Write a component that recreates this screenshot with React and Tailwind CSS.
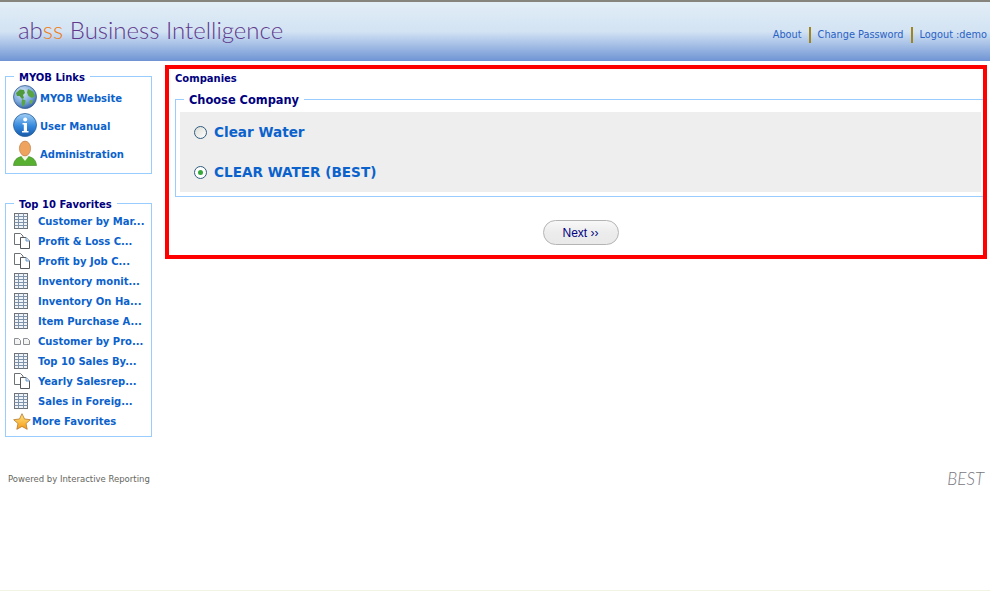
import React from "react";

const uiFont = "font-['DejaVu_Sans','Liberation_Sans',sans-serif]";

const GlobeIcon = () => (
  <svg width="24" height="24" viewBox="0 0 24 24" className="shrink-0">
    <defs>
      <radialGradient id="globeSea" cx="40%" cy="30%" r="75%">
        <stop offset="0%" stopColor="#dbe9f8" />
        <stop offset="60%" stopColor="#7aa8dc" />
        <stop offset="100%" stopColor="#2f5c9c" />
      </radialGradient>
    </defs>
    <circle cx="12" cy="12" r="11.5" fill="url(#globeSea)" stroke="#3a5f92" strokeWidth="0.8" />
    <path d="M3 8 L7 4.5 L11 5 L12 8 L10 10 L11 13 L9 14 L6.5 11 L4 11 Z" fill="#4f9a3c" />
    <path d="M9 14 L12.5 15.5 L12 19 L10 22 L8.5 18 Z" fill="#5aa443" />
    <path d="M15 4 L20 6.5 L22 11 L19 13 L15.5 11 L14 7.5 Z" fill="#5aa443" />
    <path d="M17 15 L20 15.5 L18.5 19 L16.5 18 Z" fill="#6aae4c" />
  </svg>
);

const InfoIcon = () => (
  <svg width="24" height="24" viewBox="0 0 24 24" className="shrink-0">
    <defs>
      <linearGradient id="infoBlue" x1="0" y1="0" x2="0" y2="1">
        <stop offset="0%" stopColor="#a2d0f5" />
        <stop offset="55%" stopColor="#3388dd" />
        <stop offset="100%" stopColor="#1a5aa8" />
      </linearGradient>
    </defs>
    <circle cx="12" cy="12" r="11.5" fill="url(#infoBlue)" stroke="#2a5f9c" strokeWidth="0.8" />
    <circle cx="12.2" cy="6.6" r="2" fill="#fff" />
    <path d="M9.5 10 H14 V18 H15.5 V19.5 H9 V18 H10.8 V11.5 H9.5 Z" fill="#fff" />
  </svg>
);

const UserIcon = () => (
  <svg width="24" height="26" viewBox="0 0 24 26" className="shrink-0">
    <path d="M0.5 25.5 C1 20 4 17.5 8.5 16.5 L12 19 L15.5 16.5 C20 17.5 23 20 23.5 25.5 Z" fill="#58b030" stroke="#3d7d20" strokeWidth="0.6" />
    <path d="M8.5 16.5 L12 21 L15.5 16.5 L14 15 H10 Z" fill="#f3f7e8" />
    <ellipse cx="12" cy="8.5" rx="5.6" ry="7.4" fill="#eea35f" stroke="#b8733a" strokeWidth="0.6" />
  </svg>
);

const TableIcon = () => (
  <svg width="14" height="16" viewBox="0 0 14 16">
    <rect x="0.5" y="0.5" width="13" height="15" fill="#f1f4f7" stroke="#6c7178" />
    <path d="M0.5 3.5 H13.5 M0.5 6.5 H13.5 M0.5 9.5 H13.5 M0.5 12.5 H13.5 M4.5 0.5 V15.5 M9.5 0.5 V15.5" stroke="#7f93ab" />
  </svg>
);

const CopiesIcon = () => (
  <svg width="16" height="16" viewBox="0 0 16 16">
    <path d="M0.5 0.5 H6.5 L9 3 V11.5 H0.5 Z" fill="#fff" stroke="#6c7178" />
    <path d="M6.5 4.5 H12 L15.5 8 V15.5 H6.5 Z" fill="#fff" stroke="#55595e" />
    <path d="M12 4.5 V8 H15.5" fill="#cfe2f5" stroke="#6f9ccc" />
  </svg>
);

const SmallDocsIcon = () => (
  <svg width="16" height="7" viewBox="0 0 16 7">
    <path d="M0.5 0.5 H4.5 L6.5 2.5 V6.5 H0.5 Z" fill="#f4f4f4" stroke="#8b8f94" />
    <path d="M9.5 0.5 H13.5 L15.5 2.5 V6.5 H9.5 Z" fill="#f4f4f4" stroke="#8b8f94" />
  </svg>
);

const StarIcon = () => (
  <svg width="18" height="17" viewBox="0 0 18 17" className="shrink-0">
    <defs>
      <linearGradient id="starFill" x1="0" y1="0" x2="0" y2="1">
        <stop offset="0%" stopColor="#ffe680" />
        <stop offset="100%" stopColor="#f59a16" />
      </linearGradient>
    </defs>
    <path d="M9 0.7 L11.5 6 L17.3 6.7 L13 10.6 L14.2 16.3 L9 13.4 L3.8 16.3 L5 10.6 L0.7 6.7 L6.5 6 Z" fill="url(#starFill)" stroke="#b9772a" strokeWidth="0.8" strokeLinejoin="round" />
  </svg>
);

const links = [
  { label: "MYOB Website", icon: <GlobeIcon /> },
  { label: "User Manual", icon: <InfoIcon /> },
  { label: "Administration", icon: <UserIcon /> },
];

const favorites = [
  { label: "Customer by Mar...", icon: <TableIcon /> },
  { label: "Profit & Loss C...", icon: <CopiesIcon /> },
  { label: "Profit by Job C...", icon: <CopiesIcon /> },
  { label: "Inventory monit...", icon: <TableIcon /> },
  { label: "Inventory On Ha...", icon: <TableIcon /> },
  { label: "Item Purchase A...", icon: <TableIcon /> },
  { label: "Customer by Pro...", icon: <SmallDocsIcon /> },
  { label: "Top 10 Sales By...", icon: <TableIcon /> },
  { label: "Yearly Salesrep...", icon: <CopiesIcon /> },
  { label: "Sales in Foreig...", icon: <TableIcon /> },
];

const App = () => {
  return (
    <div className={`h-[591px] w-[990px] overflow-hidden bg-white border-b border-[#f3f3e3] ${uiFont}`}>
      {/* HEADER */}
      <header className="h-[61px] border-t-2 border-[#85857d] bg-gradient-to-b from-[#e2eef7] via-[#d3e3f3] to-[#7094d4] flex justify-between pl-[18px] pr-[3px]">
        <div className="pt-[13px] text-[24px] leading-[30px] font-light text-[#5f3a8c] font-['Lato',sans-serif]">
          ab<span className="text-[#f07a10]">ss</span> Business Intelligence
        </div>
        <nav className="pt-[25px] flex items-start text-[9.75px] leading-[16px] text-[#2a62c4]">
          <a>About</a>
          <span className="mx-[7px] h-[16px] w-[2px] bg-[#a08420]" />
          <a>Change Password</a>
          <span className="mx-[7px] h-[16px] w-[2px] bg-[#a08420]" />
          <a>Logout :demo</a>
        </nav>
      </header>

      <div className="flex">
        {/* SIDEBAR */}
        <aside className="w-[165px] shrink-0 pl-[5px] pt-[8px]">
          <fieldset className="w-[147px] h-[105px] border border-[#99ccff] pl-[7px]">
            <legend className="ml-[1px] px-[5px] pt-[2px] text-[10px] leading-[13px] font-bold text-[#000080]">MYOB Links</legend>
            <ul className="flex flex-col gap-[3px]">
              {links.map((item) => (
                <li key={item.label} className="h-[25px] flex items-center gap-[3px]">
                  {item.icon}
                  <span className="text-[10px] font-bold text-[#0b62cc] mt-[3px]">{item.label}</span>
                </li>
              ))}
            </ul>
          </fieldset>

          <fieldset className="mt-[22px] w-[147px] h-[241px] border border-[#99ccff] pl-[8px]">
            <legend className="px-[5px] pt-[2px] text-[10px] leading-[13px] font-bold text-[#000080]">Top 10 Favorites</legend>
            <ul>
              {favorites.map((item) => (
                <li key={item.label} className="h-[20px] flex items-center">
                  <span className="w-[24px] shrink-0 flex items-center">{item.icon}</span>
                  <span className="text-[10px] font-bold text-[#0b62cc] whitespace-nowrap">{item.label}</span>
                </li>
              ))}
              <li className="h-[20px] flex items-center gap-[1px] -ml-[1px]">
                <StarIcon />
                <span className="text-[10px] font-bold text-[#0b62cc]">More Favorites</span>
              </li>
            </ul>
          </fieldset>

          <div className="mt-[36px] ml-[3px] text-[8.5px] leading-[12px] text-[#66665e] whitespace-nowrap">Powered by Interactive Reporting</div>
        </aside>

        {/* MAIN */}
        <main className="flex-1 min-w-0 pt-[4px] pr-[3px]">
          <div className="h-[194px] border-[4px] border-[#ff0000] overflow-hidden pl-[6px] pt-[3px]">
            <h2 className="text-[10px] leading-[14px] font-bold text-[#000080]">Companies</h2>
            <fieldset className="mt-[5px] -mr-[4px] h-[106px] border border-[#99ccff] pl-[4px] pr-[5px]">
              <legend className="ml-[4px] px-[5px] pt-[2px] text-[11.4px] leading-[15px] font-bold text-[#000080]">Choose Company</legend>
              <div className="bg-[#eeeeee] h-[80px] mt-[4px] pl-[14px] flex flex-col">
                <label className="h-[40px] flex items-center gap-[7px]">
                  <span className="w-[13px] h-[13px] rounded-full border border-[#2f5c80] bg-gradient-to-br from-[#dcdcd6] to-white" />
                  <span className="text-[13.6px] font-bold text-[#0b62cc]">Clear Water</span>
                </label>
                <label className="h-[40px] flex items-center gap-[7px]">
                  <span className="w-[13px] h-[13px] rounded-full border border-[#2f5c80] bg-white flex items-center justify-center">
                    <span className="w-[5px] h-[5px] rounded-full bg-[#35a83a]" />
                  </span>
                  <span className="text-[13.6px] font-bold text-[#0b62cc]">CLEAR WATER (BEST)</span>
                </label>
              </div>
            </fieldset>
            <div className="mt-[23px] pl-[3px] flex justify-center">
              <button className="w-[76px] h-[25px] rounded-full border border-[#b4b4b4] bg-gradient-to-b from-[#f8f8f8] via-[#ececec] to-[#e9e9e9] text-[12px] text-[#000080] flex items-center justify-center font-['Liberation_Sans',sans-serif]">
                Next ››
              </button>
            </div>
          </div>
          <div className="mt-[210px] pr-[3px] text-right text-[17px] leading-[20px] italic font-light text-[#77777f] font-['Lato',sans-serif]">BEST</div>
        </main>
      </div>
    </div>
  );
};

export default App;
